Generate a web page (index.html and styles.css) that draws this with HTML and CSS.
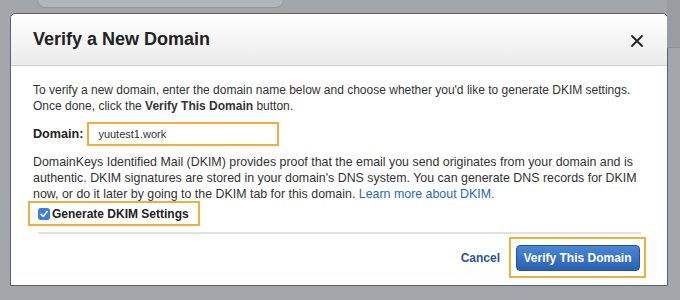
FILE: index.html
```html
<!DOCTYPE html>
<html lang="en">
<head>
  <meta charset="UTF-8" />
  <title>Verify a New Domain</title>
  <link rel="stylesheet" href="styles.css">
</head>
<body>
  <div class="topbar">
    <div class="search"></div>
    <div class="band"></div>
  </div>
  <div class="modal">
    <div class="modal-header">
      <h1>Verify a New Domain</h1>
      <span class="close">
        <svg width="14" height="14" viewBox="0 0 14 14"><path d="M2 2 L12 12 M12 2 L2 12" stroke="#222" stroke-width="1.8" stroke-linecap="round"/></svg>
      </span>
    </div>
    <div class="modal-body">
      <p class="intro">To verify a new domain, enter the domain name below and choose whether you'd like to generate DKIM settings. Once done, click the <strong>Verify This Domain</strong> button.</p>
      <div class="field">
        <label for="domain">Domain:</label>
        <div class="hl hl-input"><input id="domain" type="text" value="yuutest1.work"></div>
      </div>
      <p class="dkim">DomainKeys Identified Mail (DKIM) provides proof that the email you send originates from your domain and is authentic. DKIM signatures are stored in your domain's DNS system. You can generate DNS records for DKIM now, or do it later by going to the DKIM tab for this domain. <a href="#">Learn more about DKIM.</a></p>
      <div class="hl hl-check">
        <span class="checkbox">
          <svg width="10" height="10" viewBox="0 0 10 10"><path d="M2 5.2 L4.2 7.4 L8.2 2.6" fill="none" stroke="#fff" stroke-width="1.6" stroke-linecap="round" stroke-linejoin="round"/></svg>
        </span>
        <span class="check-label">Generate DKIM Settings</span>
      </div>
    </div>
    <div class="modal-footer">
      <a href="#" class="cancel">Cancel</a>
      <div class="hl hl-btn"><button class="primary">Verify This Domain</button></div>
    </div>
  </div>
</body>
</html>
```

FILE: styles.css
```css
body {
  margin: 0;
  width: 680px;
  height: 300px;
  overflow: hidden;
  background-color: #a3a6aa;
  font-family: "Liberation Sans", Arial, sans-serif;
  color: #333;
  position: relative;
}
.topbar {
  height: 13px;
}
.search {
  position: absolute;
  left: 37px;
  top: -16px;
  width: 245px;
  height: 22px;
  border-radius: 8px;
  background-color: #b2b5b9;
  border: 1px solid #95989c;
}
.band {
  position: absolute;
  right: 0;
  top: 0;
  width: 13px;
  height: 47px;
  background-color: #999ca0;
  border-bottom: 1px solid #8c8f93;
}
.modal {
  margin-left: 10px;
  width: 658px;
  height: 273px;
  background-color: #fff;
  border: 1px solid #5f6166;
  border-radius: 5px 5px 0 0;
  box-sizing: border-box;
  display: flex;
  flex-direction: column;
}
.modal-header {
  height: 51px;
  flex: none;
  display: flex;
  align-items: center;
  justify-content: space-between;
  padding: 0 23px 0 22px;
  background: linear-gradient(#ffffff, #ebebeb);
  border-bottom: 1px solid #d2d2d2;
  border-radius: 5px 5px 0 0;
}
h1 {
  margin: 0;
  font-size: 18px;
  font-weight: bold;
  color: #222;
}
.close {
  display: flex;
  margin-top: 2px;
}
.modal-body {
  padding: 16px 22px 0 22px;
  line-height: 16px;
}
.intro {
  margin: 0;
  font-size: 12px;
}
.dkim {
  margin: 0;
  font-size: 12.4px;
}
.field {
  display: flex;
  align-items: center;
  margin: 8px 0 8px 0;
  font-size: 12.6px;
}
label {
  font-weight: bold;
  color: #222;
  margin-right: 4px;
}
.hl {
  border: 2px solid #f2ae3c;
  box-sizing: border-box;
}
.hl-input {
  width: 192px;
  height: 24px;
  padding: 1px;
}
input {
  border: none;
  width: 100%;
  height: 100%;
  box-sizing: border-box;
  padding: 0 8px;
  font-family: inherit;
  font-size: 11px;
  color: #333;
  outline: none;
}
.dkim a {
  color: #2a6ab3;
  text-decoration: none;
}
.hl-check {
  display: flex;
  align-items: center;
  width: 172px;
  height: 25px;
  margin: -1px 0 0 -5px;
  padding-left: 8px;
}
.checkbox {
  width: 12px;
  height: 12px;
  border-radius: 3px;
  background-color: #3b7de0;
  display: flex;
  align-items: center;
  justify-content: center;
  margin-right: 2px;
}
.check-label {
  font-weight: bold;
  font-size: 12px;
  color: #222;
}
.modal-footer {
  margin: 6px 26px 0 27px;
  border-top: 2px solid #e2e2e2;
  display: flex;
  justify-content: flex-end;
  align-items: center;
  padding-top: 3px;
}
.cancel {
  color: #2a5493;
  font-weight: bold;
  font-size: 12px;
  text-decoration: none;
  margin-right: 9px;
}
.hl-btn {
  width: 137px;
  height: 41px;
  display: flex;
  align-items: center;
  justify-content: center;
  margin-right: -5px;
}
.primary {
  width: 124px;
  height: 26px;
  border: 1px solid #23509a;
  border-radius: 4px;
  background: linear-gradient(#4a87d6, #2a60b4);
  color: #fff;
  font-family: inherit;
  font-weight: bold;
  font-size: 12px;
  padding: 0;
}
```
